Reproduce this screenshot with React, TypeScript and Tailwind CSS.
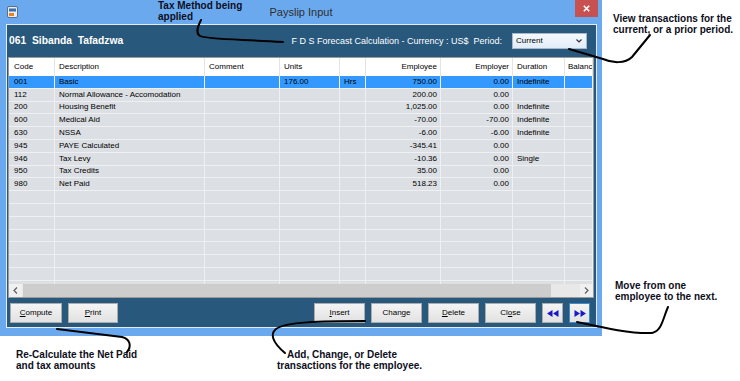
import React from "react";

const COLS = "grid grid-cols-[46px_150px_75px_60px_26px_75px_72px_52px_28px]";

type Row = string[];

const rows: Row[] = [
  ["001", "Basic", "", "176.00", "Hrs", "750.00", "0.00", "Indefinite", ""],
  ["112", "Normal Allowance - Accomodation", "", "", "", "200.00", "0.00", "", ""],
  ["200", "Housing Benefit", "", "", "", "1,025.00", "0.00", "Indefinite", ""],
  ["600", "Medical Aid", "", "", "", "-70.00", "-70.00", "Indefinite", ""],
  ["630", "NSSA", "", "", "", "-6.00", "-6.00", "Indefinite", ""],
  ["945", "PAYE Calculated", "", "", "", "-345.41", "0.00", "", ""],
  ["946", "Tax Levy", "", "", "", "-10.36", "0.00", "Single", ""],
  ["950", "Tax Credits", "", "", "", "35.00", "0.00", "", ""],
  ["980", "Net Paid", "", "", "", "518.23", "0.00", "", ""],
];

const empty: Row = ["", "", "", "", "", "", "", "", ""];
const allRows: Row[] = [...rows, ...Array.from({ length: 8 }, () => empty)];

const headers = ["Code", "Description", "Comment", "Units", "", "Employee", "Employer", "Duration", "Balanc"];

function AppIcon() {
  return (
    <svg width="11" height="12" viewBox="0 0 11 12">
      <rect x="0.5" y="0.5" width="10" height="11" rx="1.5" fill="#e9eef4" stroke="#5c6f86" />
      <rect x="2" y="2.5" width="7" height="3" fill="#3a6fb0" />
      <rect x="2" y="7" width="5" height="3" fill="#e8841f" />
    </svg>
  );
}

function Btn({ children, w, focus }: { children: React.ReactNode; w: string; focus?: boolean }) {
  return (
    <div
      className={`h-[20px] ${w} border ${
        focus ? "border-[#3c8bd0]" : "border-[#acacac]"
      } bg-gradient-to-b from-[#f4f4f4] to-[#e2e2e2] flex items-center justify-center text-[8px] text-black leading-none`}
    >
      {children}
    </div>
  );
}

function Arrow({ dir }: { dir: "l" | "r" }) {
  return (
    <div className="w-[13px] h-[13px] flex items-center justify-center bg-[#f0f0f0]">
      <svg width="5" height="7" viewBox="0 0 5 7">
        {dir === "l" ? (
          <path d="M4 0.5 L1 3.5 L4 6.5" stroke="#606060" strokeWidth="1.2" fill="none" />
        ) : (
          <path d="M1 0.5 L4 3.5 L1 6.5" stroke="#606060" strokeWidth="1.2" fill="none" />
        )}
      </svg>
    </div>
  );
}

export default function App() {
  return (
    <div className="relative w-[740px] h-[381px] bg-white overflow-hidden font-['Liberation_Sans',Arial,sans-serif] text-black">
      {/* Window */}
      <div className="w-[602px] h-[336px] bg-[#6ba9ef] flex flex-col">
        {/* Title bar */}
        <div className="h-[24px] grid grid-cols-[1fr_auto_1fr] items-center">
          <div className="pl-[7px] flex items-center">
            <AppIcon />
          </div>
          <div className="text-[11px] text-[#2e2e2e] leading-none">Payslip Input</div>
          <div className="flex justify-end self-start pr-[4px]">
            <div className="w-[23px] h-[17px] bg-[#c75050] flex items-center justify-center">
              <svg width="7" height="7" viewBox="0 0 7 7">
                <path d="M0.8 0.8 L6.2 6.2 M6.2 0.8 L0.8 6.2" stroke="#fff" strokeWidth="1.6" />
              </svg>
            </div>
          </div>
        </div>

        {/* Dark panel */}
        <div className="ml-[6px] w-[591px] h-[304px] bg-[#28587c] border border-[#e3ecf7] flex flex-col">
          {/* Header */}
          <div className="h-[32px] flex items-center justify-between pl-[2px] pr-[9px]">
            <div className="text-[10.3px] font-bold text-white whitespace-pre leading-none">061  Sibanda  Tafadzwa</div>
            <div className="flex items-center">
              <div className="text-[9px] text-white whitespace-pre leading-none">
                F D S Forecast Calculation - Currency : US$  Period:
              </div>
              <div className="ml-[10px] w-[75px] h-[16px] border border-[#a9b8c8] bg-gradient-to-b from-[#f5f9fd] to-[#e2ecf8] flex items-center justify-between pl-[3px] pr-[4px]">
                <span className="text-[8px] leading-none">Current</span>
                <svg width="6" height="4" viewBox="0 0 6 4">
                  <path d="M0.5 0.5 L3 3 L5.5 0.5" stroke="#333" strokeWidth="1.2" fill="none" />
                </svg>
              </div>
            </div>
          </div>

          {/* Grid */}
          <div className="ml-[1px] w-[586px] h-[241px] border border-[#9a9a9a] bg-white flex flex-col">
            <div className={`${COLS} h-[18px] bg-white`}>
              {headers.map((h, i) => (
                <div
                  key={i}
                  className={`border-r border-[#e4e4e4] flex items-center overflow-hidden whitespace-nowrap text-[8px] leading-none ${
                    i === 5 || i === 6
                      ? "justify-end pr-[3px]"
                      : i === 0
                      ? "pl-[5px]"
                      : i === 8
                      ? "pl-[3px]"
                      : "pl-[4px]"
                  }`}
                >
                  {h}
                </div>
              ))}
            </div>
            <div className="h-[208px] overflow-hidden flex flex-col">
              {allRows.map((r, ri) => (
                <div
                  key={ri}
                  className={`${COLS} h-[12.8px] shrink-0 ${ri === 0 ? "bg-[#3399ff]" : "bg-[#dcdfe3]"}`}
                >
                  {r.map((c, ci) => (
                    <div
                      key={ci}
                      className={`border-r border-b border-[#eef0f2] flex items-center overflow-hidden whitespace-nowrap text-[8px] leading-none ${
                        ci === 5 || ci === 6 ? "justify-end pr-[3px]" : ci === 0 ? "pl-[5px]" : "pl-[4px]"
                      }`}
                    >
                      {c}
                    </div>
                  ))}
                </div>
              ))}
            </div>
            <div className="h-[13px] flex bg-[#e8e8e8]">
              <Arrow dir="l" />
              <div className="ml-[1px] w-[528px] h-[13px] bg-[#cdcdcd]" />
              <div className="flex-1" />
              <Arrow dir="r" />
            </div>
          </div>

          {/* Buttons */}
          <div className="mt-[5px] h-[20px] flex justify-between pl-[3px] pr-[6px]">
            <div className="flex gap-[6px]">
              <Btn w="w-[52px]">
                <span>
                  <u>C</u>ompute
                </span>
              </Btn>
              <Btn w="w-[50px]">
                <span>
                  <u>P</u>rint
                </span>
              </Btn>
            </div>
            <div className="flex gap-[6px]">
              <Btn w="w-[51px]">
                <span>
                  <u>I</u>nsert
                </span>
              </Btn>
              <Btn w="w-[51px]">
                <span>
                  Chan<u>g</u>e
                </span>
              </Btn>
              <Btn w="w-[51px]">
                <span>
                  <u>D</u>elete
                </span>
              </Btn>
              <Btn w="w-[51px]">
                <span>
                  Cl<u>o</u>se
                </span>
              </Btn>
              <Btn w="w-[21px]">
                <svg width="12" height="7" viewBox="0 0 12 7">
                  <polygon points="5.5,0 5.5,7 0,3.5" fill="#1818c8" />
                  <polygon points="11.5,0 11.5,7 6,3.5" fill="#1818c8" />
                </svg>
              </Btn>
              <Btn w="w-[21px]" focus>
                <svg width="12" height="7" viewBox="0 0 12 7">
                  <polygon points="0.5,0 6,3.5 0.5,7" fill="#1818c8" />
                  <polygon points="6.5,0 12,3.5 6.5,7" fill="#1818c8" />
                </svg>
              </Btn>
            </div>
          </div>
        </div>
      </div>

      {/* Annotations */}
      <div className="absolute left-[158px] top-0 text-[10px] font-bold leading-[11px] text-[#0e0e1c]">
        <div>Tax Method being</div>
        <div>applied</div>
      </div>
      <div className="absolute left-[613px] top-[13px] text-[10px] font-bold leading-[11px] text-[#0e0e1c]">
        <div>View transactions for the</div>
        <div>current, or a prior period.</div>
      </div>
      <div className="absolute left-[615px] top-[280px] text-[10px] font-bold leading-[11px] text-[#0e0e1c]">
        <div>Move from one</div>
        <div>employee to the next.</div>
      </div>
      <div className="absolute left-[16px] top-[349px] text-[10px] font-bold leading-[11px] text-[#0e0e1c]">
        <div>Re-Calculate the Net Paid</div>
        <div>and tax amounts</div>
      </div>
      <div className="absolute left-[277px] top-[349px] text-[10px] font-bold leading-[11px] text-[#0e0e1c]">
        <div className="pl-[10px]">Add, Change, or Delete</div>
        <div>transactions for the employee.</div>
      </div>

      {/* Callout lines */}
      <svg className="absolute left-0 top-0 pointer-events-none" width="740" height="381" viewBox="0 0 740 381">
        <g stroke="#000" strokeWidth="2" fill="none" strokeLinecap="round" strokeLinejoin="round">
          <path d="M201 20 C198 26, 195 33, 200 36 C205 39, 230 39, 283 42" />
          <path d="M569 49 L603 59 C612 63, 625 64, 632 57 L650 35" />
          <path d="M57 329 L122 337 C130 339, 132 346, 127 352" />
          <path d="M365 321 C320 321, 285 322, 276 329 C270 334, 272 342, 285 353" />
          <path d="M577 322 C600 327, 630 334, 652 333 C662 331, 663 318, 668 307" />
        </g>
      </svg>
    </div>
  );
}
